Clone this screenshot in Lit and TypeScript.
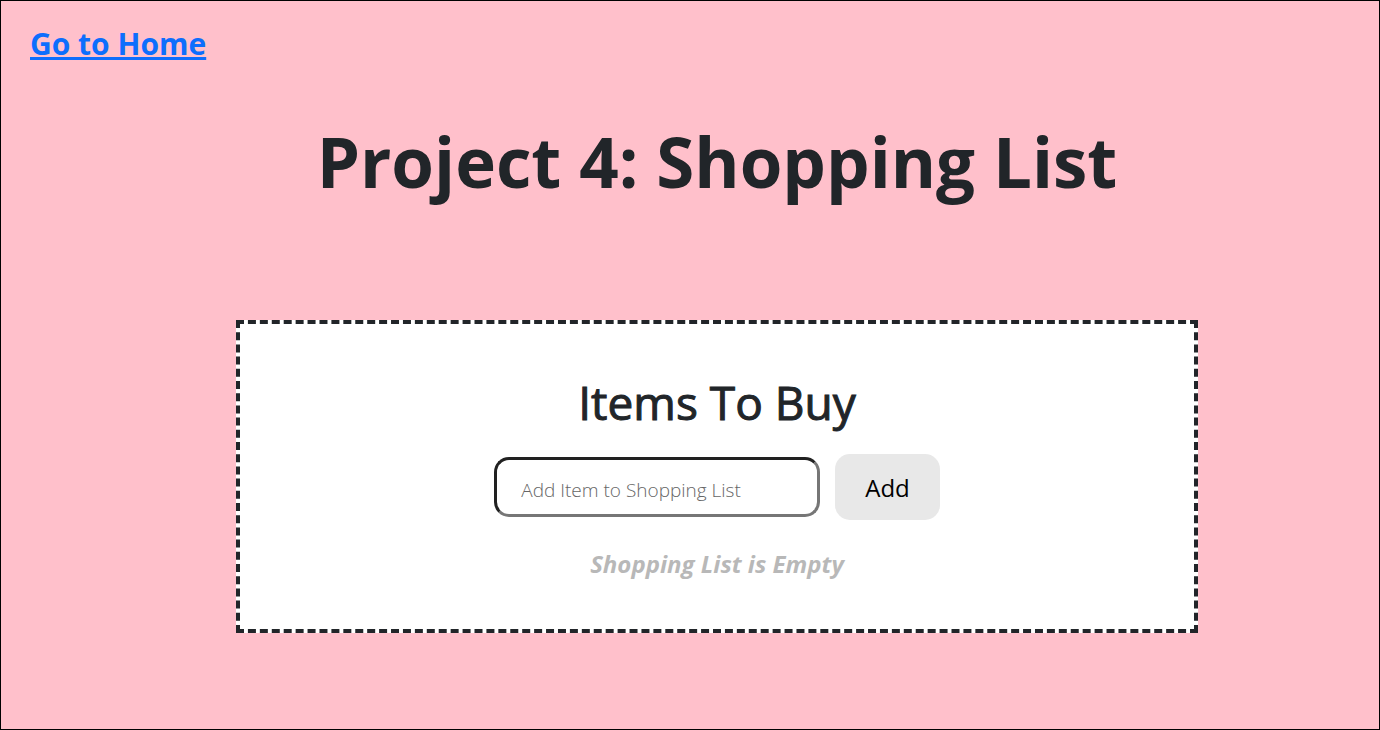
import { LitElement, html, css } from "lit";
import { customElement, state } from "lit/decorators.js";

@customElement("app-root")
export class AppRoot extends LitElement {
  static styles = css`
    :host {
      display: block;
      font-family: "Segoe UI", "Open Sans", "Noto Sans", sans-serif;
      color: #212529;
    }
    * {
      box-sizing: border-box;
    }
    .page {
      min-height: 100vh;
      padding: 23px 0 48px;
      border: 1px solid #000;
      background: #ffc0cb;
    }
    .home {
      display: inline-block;
      margin-left: 29px;
      font-size: 30px;
      font-weight: 700;
      line-height: 40px;
      color: #0d6efd;
      text-decoration: underline;
      text-decoration-thickness: 3px;
      text-underline-offset: 2px;
      text-decoration-skip-ink: none;
    }
    .content {
      display: flex;
      flex-direction: column;
      align-items: center;
      padding-left: 54px;
    }
    .title {
      margin: 53px 0 115px;
      font-size: 69px;
      font-weight: 700;
      line-height: 88px;
      text-align: center;
    }
    .card {
      display: flex;
      flex-direction: column;
      align-items: center;
      width: 100%;
      max-width: 962px;
      padding: 49px 24px 45px;
      border: 4px dashed #212529;
      background: #fff;
    }
    .subtitle {
      margin: 0 0 23px;
      font-size: 46px;
      font-weight: 500;
      line-height: 58px;
      -webkit-text-stroke: 1px currentColor;
    }
    .form {
      display: flex;
      align-items: center;
      gap: 15px;
    }
    .field {
      width: 326px;
      height: 60px;
      padding: 6px 24px 0;
      border: 3px inset #767676;
      border-radius: 15px;
      background: #fff;
      font: inherit;
      font-size: 19px;
    }
    .field::placeholder {
      font-weight: 300;
      color: #666;
      opacity: 1;
    }
    .add {
      padding: 17px 30px 15px;
      border: 0;
      border-radius: 15px;
      background: #e8e8e8;
      font: inherit;
      font-size: 24px;
      font-weight: 500;
      line-height: 34px;
      color: #000;
      cursor: pointer;
    }
    .list {
      margin: 24px 0 0;
      padding: 0;
      list-style: none;
      font-size: 24px;
      line-height: 40px;
    }
    .empty {
      margin: 24px 0 0;
      font-size: 24px;
      font-style: italic;
      font-weight: 700;
      line-height: 40px;
      color: #b8b8b8;
    }
  `;

  @state() private items: string[] = [];

  private addItem(event: Event) {
    event.preventDefault();
    const form = event.target as HTMLFormElement;
    const text = String(new FormData(form).get("item") ?? "").trim();
    if (!text) return;
    this.items = [...this.items, text];
    form.reset();
  }

  render() {
    return html`
      <div class="page">
        <a class="home" href="#">Go to Home</a>
        <main class="content">
          <h1 class="title">Project 4: Shopping List</h1>
          <section class="card">
            <h2 class="subtitle">Items To Buy</h2>
            <form class="form" @submit=${this.addItem}>
              <input
                class="field"
                type="text"
                name="item"
                aria-label="Add Item to Shopping List"
                placeholder="Add Item to Shopping List"
              />
              <button class="add" type="submit">Add</button>
            </form>
            ${this.items.length
              ? html`<ul class="list">${this.items.map((item) => html`<li>${item}</li>`)}</ul>`
              : html`<p class="empty">Shopping List is Empty</p>`}
          </section>
        </main>
      </div>
    `;
  }
}
